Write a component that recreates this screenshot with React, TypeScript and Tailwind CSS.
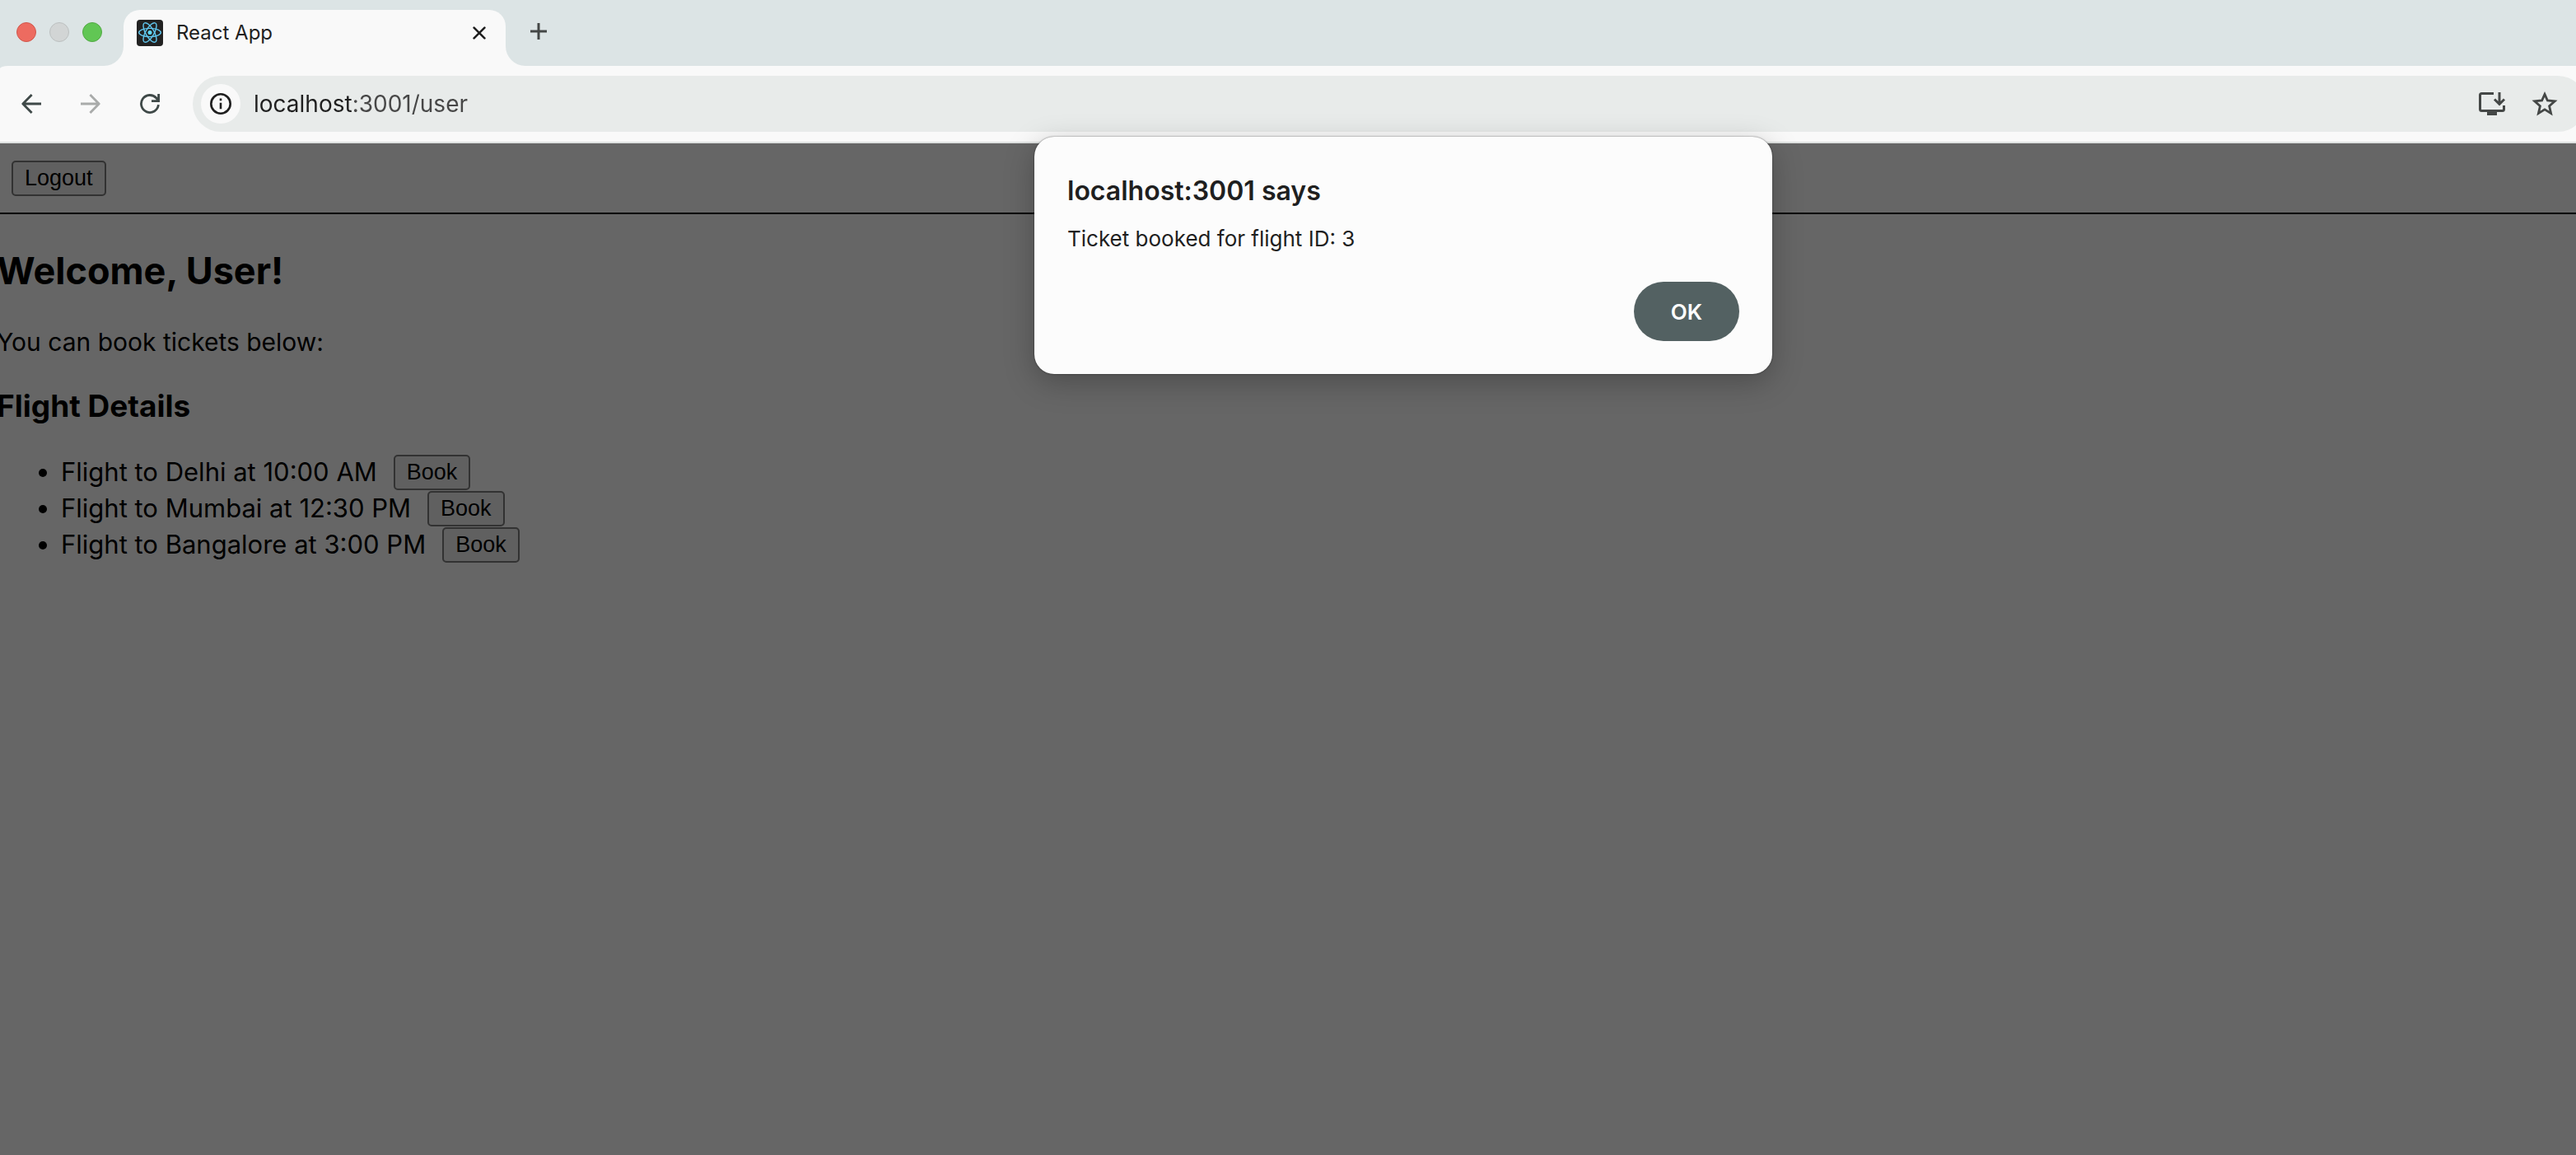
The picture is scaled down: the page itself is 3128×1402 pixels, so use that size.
function ReactFavicon() {
  return (
    <svg viewBox="0 0 32 32" className="size-8 shrink-0" aria-hidden="true">
      <rect width="32" height="32" rx="4" fill="#222222" />
      <g stroke="#61c8f0" strokeWidth="1.4" fill="none">
        <ellipse cx="16" cy="15.5" rx="13.3" ry="5.1" />
        <ellipse cx="16" cy="15.5" rx="13.3" ry="5.1" transform="rotate(60 16 15.5)" />
        <ellipse cx="16" cy="15.5" rx="13.3" ry="5.1" transform="rotate(120 16 15.5)" />
      </g>
      <circle cx="16" cy="15.5" r="2.5" fill="#61dafb" />
    </svg>
  );
}

function TabStrip() {
  return (
    <header className="flex h-20 items-stretch">
      <div className="flex items-center gap-4 pb-0.5 pl-5">
        <button aria-label="Close window" className="size-6 rounded-full border border-[#d0574c] bg-[#ed6b60]" />
        <button aria-label="Minimize window" className="size-6 rounded-full border border-[#bcc0c0] bg-[#d2d5d5]" />
        <button aria-label="Zoom window" className="size-6 rounded-full border border-[#52a944] bg-[#61c654]" />
      </div>
      <svg viewBox="0 0 26 80" className="h-20 w-[26px]" aria-hidden="true">
        <path d="M2 80A24 24 0 0 0 26 56V80Z" fill="#f9f9f9" />
      </svg>
      <div className="mt-3 flex w-[464px] items-center rounded-t-[20px] bg-[#f9f9f9] pr-6 pb-3 pl-4">
        <ReactFavicon />
        <span className="ml-4 flex-1 text-2xl text-[#1f1f1f]">React App</span>
        <button aria-label="Close tab" className="size-4">
          <svg viewBox="0 0 16 16" className="size-4" stroke="#1f1f1f" strokeWidth="2.6" strokeLinecap="round">
            <path d="M1.6 1.6L14.4 14.4M14.4 1.6L1.6 14.4" />
          </svg>
        </button>
      </div>
      <svg viewBox="0 0 26 80" className="h-20 w-[26px]" aria-hidden="true">
        <path d="M24 80A24 24 0 0 1 0 56V80Z" fill="#f9f9f9" />
      </svg>
      <button aria-label="New tab" className="mb-1 ml-1 self-center">
        <svg viewBox="0 0 20 20" className="size-5" stroke="#444746" strokeWidth="3">
          <path d="M10 0V20M0 10H20" />
        </svg>
      </button>
    </header>
  );
}

function Toolbar() {
  return (
    <nav className="flex h-[94px] items-center overflow-hidden rounded-tl-[10px_3px] border-b-2 border-[#dfe2e1] bg-[#f9f9f9] pl-[26px]">
      <button aria-label="Back" className="mr-12">
        <svg viewBox="0 0 24 24" className="size-6" fill="none" stroke="#3f4948" strokeWidth="2.8">
          <path d="M24 12H2.5M12.6 1L1.8 12L12.6 23" strokeLinejoin="round" />
        </svg>
      </button>
      <button aria-label="Forward" className="mr-12" disabled>
        <svg viewBox="0 0 24 24" className="size-6" fill="none" stroke="#a9abaa" strokeWidth="2.8">
          <path d="M0 12H21.5M11.4 1L22.2 12L11.4 23" strokeLinejoin="round" />
        </svg>
      </button>
      <button aria-label="Reload" className="mr-10">
        <svg viewBox="0 0 24 24" className="size-6" fill="none" stroke="#3f4948" strokeWidth="2.8">
          <path d="M22.4 13.2A10.5 10.5 0 1 1 19.8 5L22.4 8.4M22.6 0V8.6H14" />
        </svg>
      </button>
      <div className="-mr-3 flex h-[68px] flex-1 items-center rounded-full bg-[#e8ebea] pr-[34px] pl-[10px]">
        <button
          aria-label="View site information"
          className="flex size-12 items-center justify-center rounded-full bg-[#f9f9f9]"
        >
          <svg viewBox="0 0 26 26" className="size-[26px]" fill="none" stroke="#1f1f1f" strokeWidth="2.6">
            <circle cx="13" cy="13" r="11.7" />
            <path d="M13 11.8V19.2M13 6.6V9.2" />
          </svg>
        </button>
        <input
          aria-label="Address"
          defaultValue="localhost:3001/user"
          className="ml-4 min-w-0 flex-1 bg-[linear-gradient(to_right,#1f1f1f_120px,#474747_120px)] bg-clip-text text-[28px] text-transparent outline-none"
        />
        <button aria-label="Install app" className="mr-8">
          <svg viewBox="0 0 32 28" className="h-7 w-8" fill="none" stroke="#444746" strokeWidth="3">
            <path d="M18 1.5H3.5Q1.5 1.5 1.5 3.5V20.5Q1.5 22.5 3.5 22.5H28.5Q30.5 22.5 30.5 20.5V16" />
            <path d="M25 0V14M19 8.5L25 14.5L31 8.5" />
            <path d="M10 22.5H22V28H10Z" fill="#444746" stroke="none" />
          </svg>
        </button>
        <button aria-label="Bookmark this tab">
          <svg viewBox="0 0 32 30" className="h-[30px] w-8" fill="none" stroke="#444746" strokeWidth="2.8">
            <path d="M16 3.4L19.4 11L28.2 11.9L21.6 17.7L23.6 26.6L16 21.9L8.4 26.6L10.4 17.7L3.8 11.9L12.6 11Z" />
          </svg>
        </button>
      </div>
    </nav>
  );
}

const pageButton =
  "h-[43px] rounded-[5px] border-2 border-[#323232] bg-[#606060] px-[14px] font-['Liberation_Sans',Arial,sans-serif] text-[27px] leading-none text-black";

const flights = [
  { id: 1, city: 'Delhi', time: '10:00 AM' },
  { id: 2, city: 'Mumbai', time: '12:30 PM' },
  { id: 3, city: 'Bangalore', time: '3:00 PM' },
];

function UserPage() {
  return (
    <main className="flex-1 overflow-hidden bg-[#666666] text-black">
      <div className="flex h-[86px] items-center border-b-2 border-black pl-[14px]">
        <button className={pageButton}>Logout</button>
      </div>
      <div className="-ml-1">
        <h2 className="mt-[39px] text-[45px] leading-[60px] font-bold">Welcome, User!</h2>
        <p className="mt-9 text-[30px] leading-10">You can book tickets below:</p>
        <h3 className="mt-[34px] text-[37px] leading-[48px] font-bold">Flight Details</h3>
        <ul className="mt-[34px] list-disc pl-[78px] text-[31px] leading-[44px]">
          {flights.map((flight) => (
            <li key={flight.id}>
              <span className="flex h-11 items-center gap-5">
                Flight to {flight.city} at {flight.time}
                <button className={pageButton}>Book</button>
              </span>
            </li>
          ))}
        </ul>
      </div>
    </main>
  );
}

function AlertDialog() {
  return (
    <div className="absolute inset-x-0 top-[166px] flex justify-center pl-[280px]">
      <div
        role="alertdialog"
        aria-labelledby="alert-title"
        aria-describedby="alert-message"
        className="flex w-[896px] flex-col rounded-[24px] bg-[#fcfcfc] px-10 pt-[42px] pb-10 text-[#1f1f1f] shadow-[0_0_2px_rgba(0,0,0,0.6),0_10px_36px_rgba(0,0,0,0.25)]"
      >
        <h1 id="alert-title" className="text-[32px] leading-[48px] font-semibold">
          localhost:3001 says
        </h1>
        <p id="alert-message" className="mt-[14px] text-[26px] leading-10">
          Ticket booked for flight ID: 3
        </p>
        <button className="mt-8 h-[72px] w-32 self-end rounded-full bg-[#536162] text-[26px] font-semibold text-white">
          OK
        </button>
      </div>
    </div>
  );
}

export default function App() {
  return (
    <div className="relative flex min-h-screen flex-col overflow-hidden bg-[#dce4e5] font-['Inter',sans-serif]">
      <TabStrip />
      <Toolbar />
      <UserPage />
      <AlertDialog />
    </div>
  );
}
